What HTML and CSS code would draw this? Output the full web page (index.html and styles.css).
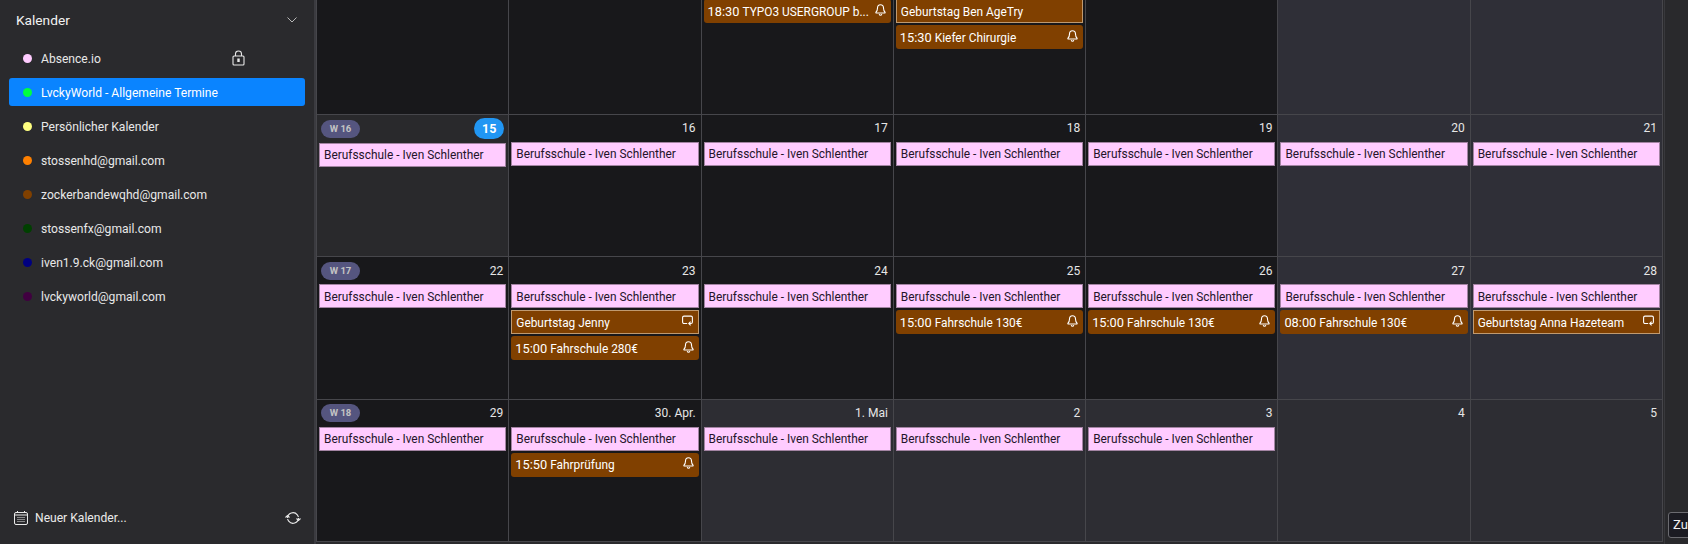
FILE: index.html
```html
<!DOCTYPE html>
<html lang="de">
<head>
<meta charset="utf-8">
<title>Kalender</title>
<link rel="stylesheet" href="styles.css">
</head>
<body>
<svg class="defs" width="0" height="0" aria-hidden="true">
  <symbol id="bell" viewBox="0 0 11 12"><path d="M5.500.7C3.600.7 2.500 2.100 2.500 4c0 2.200-.5 3.100-1.500 4.200-.3.4-.1.8.4.8h8.200c.5 0 .7-.4.4-.8C9 7.100 8.500 6.200 8.500 4c0-1.900-1.100-3.300-3-3.300zM4.200 10.100c.2.700.7 1.100 1.300 1.100s1.100-.4 1.300-1.100" fill="none" stroke="currentColor" stroke-width="1.100"/></symbol>
  <symbol id="repeat" viewBox="0 0 11 11"><path d="M5.200 8H2C1.200 8 .6 7.400.6 6.600V2C.6 1.200 1.200.6 2 .6h7c.8 0 1.400.6 1.400 1.400v4.600C10.400 7.400 9.800 8 9 8H7M8.600 6.200 6.800 8l1.800 1.800" fill="none" stroke="currentColor" stroke-width="1.100"/></symbol>
</svg>
<div class="app">
  <aside class="sidebar">
    <header class="side-head">
      <span>Kalender</span>
      <svg class="chevron" viewBox="0 0 10 6"><path d="M.5.500 5 5 9.500.5" fill="none" stroke="currentColor"/></svg>
    </header>
    <ul class="cal-list">
      <li class="cal-item"><i class="dot c-pink"></i><span>Absence.io</span>
        <svg class="lock" viewBox="0 0 13 16"><path d="M3.500 6V3.800C3.500 2 4.800 1 6.500 1s3 1 3 2.800V6M2 6h9c.6 0 1 .4 1 1v7c0 .6-.4 1-1 1H2c-.6 0-1-.4-1-1V7c0-.6.4-1 1-1z" fill="none" stroke="currentColor" stroke-width="1.100"/><rect x="5.300" y="8.500" width="2.400" height="3.500" fill="currentColor"/></svg>
      </li>
      <li class="cal-item active"><i class="dot c-green"></i><span>LvckyWorld - Allgemeine Termine</span></li>
      <li class="cal-item"><i class="dot c-yellow"></i><span>Persönlicher Kalender</span></li>
      <li class="cal-item"><i class="dot c-orange"></i><span>stossenhd@gmail.com</span></li>
      <li class="cal-item"><i class="dot c-brown"></i><span>zockerbandewqhd@gmail.com</span></li>
      <li class="cal-item"><i class="dot c-dgreen"></i><span>stossenfx@gmail.com</span></li>
      <li class="cal-item"><i class="dot c-navy"></i><span>iven1.9.ck@gmail.com</span></li>
      <li class="cal-item"><i class="dot c-purple"></i><span>lvckyworld@gmail.com</span></li>
    </ul>
    <footer class="side-foot">
      <svg class="cal-icon" viewBox="0 0 14 14"><rect x=".5" y="1.500" width="13" height="12" rx="1.500" fill="none" stroke="currentColor"/><path d="M1 4h12M3.500 0v2M10.500 0v2" stroke="currentColor" fill="none"/><path d="M3.500 6.500h7M3.500 8.500h7M3.500 10.500h7" stroke="currentColor" stroke-dasharray="1 1" fill="none"/></svg>
      <span class="new-cal">Neuer Kalender...</span>
      <svg class="sync" viewBox="0 0 16 16"><path d="M2.500 8a5.500 5.500 0 0 1 9.800-3.200L13.500 7M13.500 8a5.500 5.500 0 0 1-9.800 3.200L2.500 9" fill="none" stroke="currentColor" stroke-width="1.100"/><path d="M.5 7.500l2-2 2 2M11.500 8.500l2 2 2-2" fill="none" stroke="currentColor" stroke-width="1.100"/></svg>
    </footer>
  </aside>
  <main class="calendar">
    <div class="grid">
      <!-- row 1 -->
      <div class="cell"></div>
      <div class="cell"></div>
      <div class="cell"><div class="date"></div>
        <div class="ev brown"><b>18:30</b><span class="ev-t">TYPO3 USERGROUP b...</span><svg class="ic"><use href="#bell"/></svg></div>
      </div>
      <div class="cell"><div class="date"></div>
        <div class="ev bday"><span class="ev-t">Geburtstag Ben AgeTry</span></div>
        <div class="ev brown"><b>15:30</b><span class="ev-t">Kiefer Chirurgie</span><svg class="ic"><use href="#bell"/></svg></div>
      </div>
      <div class="cell"></div>
      <div class="cell wk"></div>
      <div class="cell wk"></div>
      <!-- row 2 -->
      <div class="cell today"><div class="date today-date"><span class="week">W 16</span><span class="today-num">15</span></div><div class="ev pink"><span class="ev-t">Berufsschule - Iven Schlenther</span></div></div>
      <div class="cell"><div class="date">16</div><div class="ev pink"><span class="ev-t">Berufsschule - Iven Schlenther</span></div></div>
      <div class="cell"><div class="date">17</div><div class="ev pink"><span class="ev-t">Berufsschule - Iven Schlenther</span></div></div>
      <div class="cell"><div class="date">18</div><div class="ev pink"><span class="ev-t">Berufsschule - Iven Schlenther</span></div></div>
      <div class="cell"><div class="date">19</div><div class="ev pink"><span class="ev-t">Berufsschule - Iven Schlenther</span></div></div>
      <div class="cell wk"><div class="date">20</div><div class="ev pink"><span class="ev-t">Berufsschule - Iven Schlenther</span></div></div>
      <div class="cell wk"><div class="date">21</div><div class="ev pink"><span class="ev-t">Berufsschule - Iven Schlenther</span></div></div>
      <!-- row 3 -->
      <div class="cell"><div class="date"><span class="week">W 17</span>22</div><div class="ev pink"><span class="ev-t">Berufsschule - Iven Schlenther</span></div></div>
      <div class="cell"><div class="date">23</div><div class="ev pink"><span class="ev-t">Berufsschule - Iven Schlenther</span></div>
        <div class="ev bday"><span class="ev-t">Geburtstag Jenny</span><svg class="ic"><use href="#repeat"/></svg></div>
        <div class="ev brown"><b>15:00</b><span class="ev-t">Fahrschule 280€</span><svg class="ic"><use href="#bell"/></svg></div>
      </div>
      <div class="cell"><div class="date">24</div><div class="ev pink"><span class="ev-t">Berufsschule - Iven Schlenther</span></div></div>
      <div class="cell"><div class="date">25</div><div class="ev pink"><span class="ev-t">Berufsschule - Iven Schlenther</span></div>
        <div class="ev brown"><b>15:00</b><span class="ev-t">Fahrschule 130€</span><svg class="ic"><use href="#bell"/></svg></div></div>
      <div class="cell"><div class="date">26</div><div class="ev pink"><span class="ev-t">Berufsschule - Iven Schlenther</span></div>
        <div class="ev brown"><b>15:00</b><span class="ev-t">Fahrschule 130€</span><svg class="ic"><use href="#bell"/></svg></div></div>
      <div class="cell wk"><div class="date">27</div><div class="ev pink"><span class="ev-t">Berufsschule - Iven Schlenther</span></div>
        <div class="ev brown"><b>08:00</b><span class="ev-t">Fahrschule 130€</span><svg class="ic"><use href="#bell"/></svg></div></div>
      <div class="cell wk"><div class="date">28</div><div class="ev pink"><span class="ev-t">Berufsschule - Iven Schlenther</span></div>
        <div class="ev bday"><span class="ev-t">Geburtstag Anna Hazeteam</span><svg class="ic"><use href="#repeat"/></svg></div></div>
      <!-- row 4 -->
      <div class="cell"><div class="date"><span class="week">W 18</span>29</div><div class="ev pink"><span class="ev-t">Berufsschule - Iven Schlenther</span></div></div>
      <div class="cell"><div class="date">30. Apr.</div><div class="ev pink"><span class="ev-t">Berufsschule - Iven Schlenther</span></div>
        <div class="ev brown"><b>15:50</b><span class="ev-t">Fahrprüfung</span><svg class="ic"><use href="#bell"/></svg></div></div>
      <div class="cell off"><div class="date">1. Mai</div><div class="ev pink"><span class="ev-t">Berufsschule - Iven Schlenther</span></div></div>
      <div class="cell off"><div class="date">2</div><div class="ev pink"><span class="ev-t">Berufsschule - Iven Schlenther</span></div></div>
      <div class="cell off"><div class="date">3</div><div class="ev pink"><span class="ev-t">Berufsschule - Iven Schlenther</span></div></div>
      <div class="cell off"><div class="date">4</div></div>
      <div class="cell off"><div class="date">5</div></div>
    </div>
  </main>
  <div class="rail"></div>
  <div class="tooltip">Zu</div>
</div>
</body>
</html>
```
FILE: styles.css
```css
* { box-sizing: border-box; }
html, body { margin: 0; height: 100%; overflow: hidden; }
body { background: #29292c; color: #f0f0f0; font: 12.1px/16px Roboto, "Noto Sans", sans-serif; }
.defs { position: absolute; }
.app { display: flex; height: 544px; position: relative; overflow: hidden; }

.sidebar { width: 314px; flex: none; display: flex; flex-direction: column; background: #2a2a2d; }
.side-head { height: 44px; flex: none; display: flex; align-items: center; justify-content: space-between; padding: 0 17px 4px 16px; font-size: 13.7px; color: #f2f2f2; }
.chevron { width: 10px; height: 6px; color: #b8b8b8; }
.cal-list { list-style: none; margin: 0; padding: 0 9px; flex: 1; }
.cal-item { height: 28px; margin: 0 0 6px; border-radius: 3px; display: flex; align-items: center; padding-left: 14px; gap: 9px; color: #e8e8e8; }
.cal-item span { padding-top: 1px; }
.cal-item.active { background: #0a84ff; color: #fff; }
.dot { width: 9px; height: 9px; border-radius: 50%; flex: none; }
.c-pink { background: #ffccff; } .c-green { background: #00ff40; } .c-yellow { background: #ffff80; }
.c-orange { background: #ff8000; } .c-brown { background: #804000; } .c-dgreen { background: #004000; }
.c-navy { background: #000080; } .c-purple { background: #400040; }
.lock { width: 13px; height: 16px; margin-left: auto; margin-right: 60px; color: #e8e8e8; }
.side-foot { height: 52px; flex: none; display: flex; align-items: center; padding: 0 13px 0 14px; color: #eaeaea; }
.cal-icon { width: 14px; height: 14px; flex: none; }
.new-cal { margin-left: 7px; flex: 1; }
.sync { width: 16px; height: 16px; flex: none; }

.calendar { width: 349px; flex: 1; overflow: hidden; background: #2a2a2d; border-left: 2px solid #3b3b40; }
.grid { display: grid; grid-template-columns: repeat(7, 1fr); grid-auto-rows: 142.5px; margin-top: -29px; border-right: 1px solid #46464b; border-bottom: 1px solid #46464b; width: 1347px; }
.cell { background: #18181b; border-left: 1px solid #46464b; border-top: 1px solid #46464b; padding: 0 2px; min-width: 0; }
.cell.wk { background: #2f2f37; }
.cell.off { background: #2d2d33; }
.cell.today { background: #29292c; }
.date { height: 27px; display: flex; align-items: center; justify-content: flex-end; padding: 0 3px 0 1px; color: #e6e6e6; font-size: 12px; }
.today-date { height: 28px; padding-right: 2px; }
.week { margin-right: auto; margin-left: 1px; width: 39px; height: 18px; border-radius: 9px; background: #55557f; color: #c4c4c4; font: bold 9.5px/18px Roboto, sans-serif; text-align: center; }
.today-num { width: 30px; height: 21px; border-radius: 11px; background: #2196f3; color: #fff; font-weight: bold; line-height: 21px; text-align: center; font-size: 12.5px; }

.ev { height: 24px; margin-bottom: 2px; display: flex; align-items: center; padding: 0 5px 0 4px; white-space: nowrap; overflow: hidden; font-size: 11.9px; }
.ev b { font-weight: 400; margin-right: 3px; font-size: 12.8px; padding-top: 1px; }
.ev-t { flex: 1; min-width: 0; overflow: hidden; line-height: 18px; padding-top: 1px; }
.ic { width: 11px; height: 12px; flex: none; margin-top: -3px; color: #fff; }
.pink { background: #ffccff; color: #24142a; border: 1px solid #a384a3; }
.brown { background: #804000; color: #fff; border-radius: 3px; }
.bday { background: #804000; color: #fff; border: 1px solid #c09a70; }

.rail { width: 24px; flex: none; background: #29292c; border-left: 1px solid #38383c; }
.tooltip { position: absolute; left: 1668px; top: 512px; width: 30px; height: 26px; border: 1px solid #6b6b70; border-radius: 3px; background: #1b1b22; color: #f0f0f0; padding: 4px 0 0 4px; font-size: 13px; }
```
